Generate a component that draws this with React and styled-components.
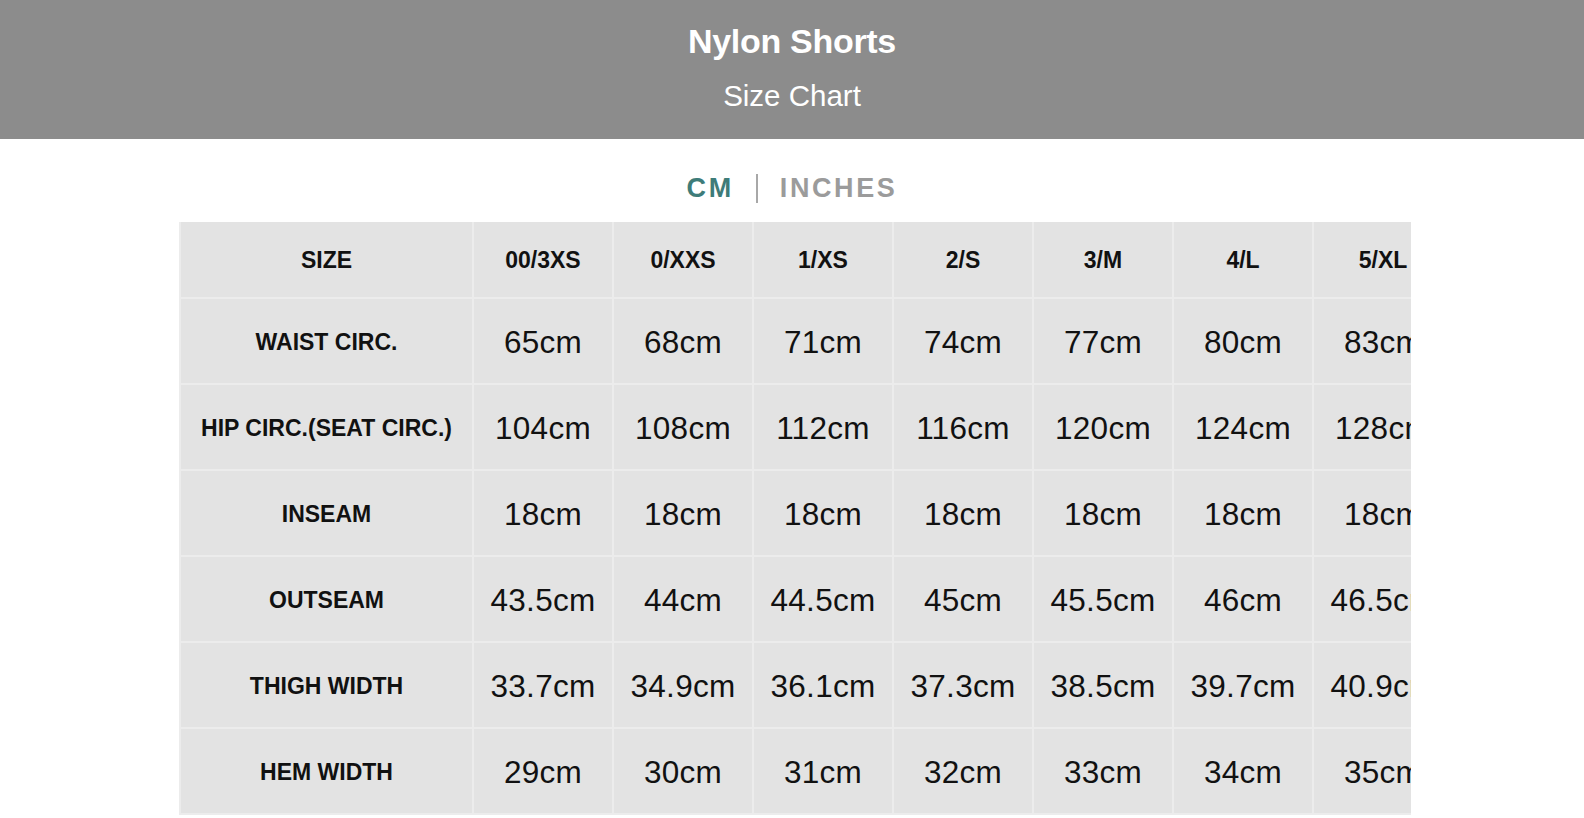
import React from "react";
import styled, { createGlobalStyle } from "styled-components";

const GlobalStyle = createGlobalStyle`
  body {
    margin: 0;
    background: #fff;
    font-family: "Liberation Sans", Arial, sans-serif;
  }
`;

const Header = styled.header`
  height: 139px;
  background-color: #8c8c8c;
  color: #fff;
  display: flex;
  flex-direction: column;
  align-items: center;
  padding-top: 20px;
  box-sizing: border-box;
`;

const Title = styled.h1`
  margin: 0;
  font-size: 34px;
  line-height: 42px;
  font-weight: 700;
  letter-spacing: -0.3px;
`;

const Subtitle = styled.p`
  margin: 18px 0 0;
  font-size: 29.5px;
  line-height: 32px;
  font-weight: 400;
`;

const UnitToggle = styled.div`
  display: flex;
  justify-content: center;
  align-items: center;
  gap: 22px;
  height: 83px;
  padding-top: 15px;
  box-sizing: border-box;
  font-size: 27px;
  font-weight: 700;
  letter-spacing: 2.6px;
`;

const Unit = styled.span`
  color: ${(props) => (props.active ? "#3e7c79" : "#9b9b9b")};
  cursor: pointer;
`;

const Divider = styled.span`
  width: 2px;
  height: 29px;
  background-color: #a8a8a8;
`;

const TableScroll = styled.div`
  width: 1232px;
  margin: 0 auto;
  overflow: hidden;
  position: relative;
  left: 3px;
`;

const Table = styled.table`
  border-collapse: collapse;
  table-layout: fixed;
  width: ${(props) => 293 + props.cols * 140}px;
  background-color: #e3e3e3;
  color: #111;
`;

const Cell = styled.td`
  border: 2px solid #ececec;
  border-top: 0;
  padding: 2px 0 0;
  text-align: center;
  vertical-align: middle;
  height: ${(props) => (props.head ? 76 : 86)}px;
  box-sizing: border-box;
  font-size: ${(props) => (props.bold ? 23 : 31.5)}px;
  font-weight: ${(props) => (props.bold ? 700 : 400)};
  letter-spacing: ${(props) => (props.bold ? "0" : "0.3px")};
  white-space: nowrap;
`;

const sizes = ["00/3XS", "0/XXS", "1/XS", "2/S", "3/M", "4/L", "5/XL", "6/XXL"];

const rows = [
  { label: "WAIST CIRC.", values: ["65cm", "68cm", "71cm", "74cm", "77cm", "80cm", "83cm", "86cm"] },
  { label: "HIP CIRC.(SEAT CIRC.)", values: ["104cm", "108cm", "112cm", "116cm", "120cm", "124cm", "128cm", "132cm"] },
  { label: "INSEAM", values: ["18cm", "18cm", "18cm", "18cm", "18cm", "18cm", "18cm", "18cm"] },
  { label: "OUTSEAM", values: ["43.5cm", "44cm", "44.5cm", "45cm", "45.5cm", "46cm", "46.5cm", "47cm"] },
  { label: "THIGH WIDTH", values: ["33.7cm", "34.9cm", "36.1cm", "37.3cm", "38.5cm", "39.7cm", "40.9cm", "42.1cm"] },
  { label: "HEM WIDTH", values: ["29cm", "30cm", "31cm", "32cm", "33cm", "34cm", "35cm", "36cm"] },
];

export default function App() {
  return (
    <>
      <GlobalStyle />
      <Header>
        <Title>Nylon Shorts</Title>
        <Subtitle>Size Chart</Subtitle>
      </Header>
      <UnitToggle>
        <Unit active>CM</Unit>
        <Divider />
        <Unit>INCHES</Unit>
      </UnitToggle>
      <TableScroll>
        <Table cols={sizes.length}>
          <colgroup>
            <col style={{ width: 293 }} />
            {sizes.map((s) => (
              <col key={s} style={{ width: 140 }} />
            ))}
          </colgroup>
          <tbody>
            <tr>
              <Cell head bold>SIZE</Cell>
              {sizes.map((s) => (
                <Cell head bold key={s}>{s}</Cell>
              ))}
            </tr>
            {rows.map((row) => (
              <tr key={row.label}>
                <Cell bold>{row.label}</Cell>
                {row.values.map((v, idx) => (
                  <Cell key={idx}>{v}</Cell>
                ))}
              </tr>
            ))}
          </tbody>
        </Table>
      </TableScroll>
    </>
  );
}
